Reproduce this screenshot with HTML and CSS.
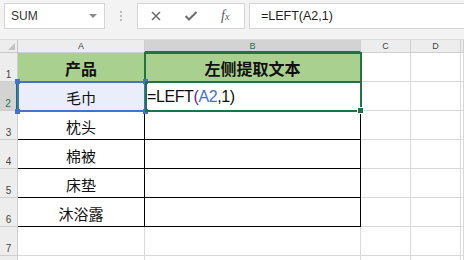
FILE: index.html
```html
<!DOCTYPE html>
<html lang="zh-CN">
<head>
    <meta charset="UTF-8">
    <title>LEFT 函数</title>
    <link rel="stylesheet" href="styles.css">
</head>
<body>
    <div class="toolbar">
        <div class="namebox">
            <span>SUM</span>
            <span class="arrow"></span>
        </div>
        <div class="sep"><span></span><span></span><span></span></div>
        <div class="fxbox">
            <svg class="icon" width="12" height="12" viewBox="0 0 12 12">
                <path d="M2 2 L10 10 M10 2 L2 10" stroke="#6d6d6d" stroke-width="1.6" fill="none"/>
            </svg>
            <svg class="icon" width="14" height="12" viewBox="0 0 14 12">
                <path d="M1.5 6 L5 9.5 L12.5 2" stroke="#6d6d6d" stroke-width="2" fill="none"/>
            </svg>
            <span class="fx">f<small>x</small></span>
        </div>
        <div class="formula">=LEFT(A2,1)</div>
    </div>

    <div class="sheet">
        <!-- column headers -->
        <div class="c corner"><span class="tri"></span></div>
        <div class="c ch">A</div>
        <div class="c ch active">B</div>
        <div class="c ch">C</div>
        <div class="c ch">D</div>
        <div class="c ch"></div>

        <!-- row 1 -->
        <div class="c rh">1</div>
        <div class="c t head">产品</div>
        <div class="c t head">左侧提取文本</div>
        <div class="c"></div><div class="c"></div><div class="c"></div>

        <!-- row 2 -->
        <div class="c rh active">2</div>
        <div class="c t ref">毛巾</div>
        <div class="c t edit">=LEFT<span class="paren">(</span><span class="blue">A2</span>,1)</div>
        <div class="c"></div><div class="c"></div><div class="c"></div>

        <div class="c rh">3</div>
        <div class="c t">枕头</div>
        <div class="c t"></div>
        <div class="c"></div><div class="c"></div><div class="c"></div>

        <div class="c rh">4</div>
        <div class="c t">棉被</div>
        <div class="c t"></div>
        <div class="c"></div><div class="c"></div><div class="c"></div>

        <div class="c rh">5</div>
        <div class="c t">床垫</div>
        <div class="c t"></div>
        <div class="c"></div><div class="c"></div><div class="c"></div>

        <div class="c rh">6</div>
        <div class="c t">沐浴露</div>
        <div class="c t"></div>
        <div class="c"></div><div class="c"></div><div class="c"></div>

        <div class="c rh">7</div>
        <div class="c"></div><div class="c"></div>
        <div class="c"></div><div class="c"></div><div class="c"></div>

        <div class="c rh"></div>
        <div class="c"></div><div class="c"></div>
        <div class="c"></div><div class="c"></div><div class="c"></div>

        <!-- selection boxes over the grid -->
        <div class="sel-b1"></div>
        <div class="sel-ref">
            <span class="h tl"></span><span class="h tr"></span>
            <span class="h bl"></span><span class="h br"></span>
        </div>
        <div class="sel-active"><span class="fill"></span></div>
    </div>
</body>
</html>
```

FILE: styles.css
```css
* {
    box-sizing: border-box;
}

body {
    margin: 0;
    background: #fff;
    font-family: "Liberation Sans", "Noto Sans CJK SC", sans-serif;
    overflow: hidden;
}

.toolbar {
    height: 40px;
    background: #f3f3f3;
    display: flex;
    align-items: flex-start;
    padding: 3px 0 0 4px;
    border-bottom: 1px solid #dcdcdc;
}

.namebox {
    width: 101px;
    height: 26px;
    background: #fff;
    border: 1px solid #d6d6d6;
    display: flex;
    align-items: center;
    justify-content: space-between;
    padding: 0 7px 0 6px;
    font-size: 12px;
    color: #333;
}

.arrow {
    width: 0;
    height: 0;
    border-left: 4px solid transparent;
    border-right: 4px solid transparent;
    border-top: 4px solid #8a8a8a;
}

.sep {
    width: 32px;
    height: 26px;
    display: flex;
    flex-direction: column;
    align-items: center;
    justify-content: center;
    gap: 2px;
}

.sep span {
    width: 2px;
    height: 2px;
    background: #bcbcbc;
}

.fxbox {
    width: 108px;
    height: 26px;
    background: #fff;
    border: 1px solid #d6d6d6;
    display: flex;
    align-items: center;
    padding-left: 12px;
    gap: 22px;
}

.fx {
    font-family: "Liberation Serif", serif;
    font-style: italic;
    font-size: 14px;
    color: #5a5a5a;
    margin-left: 1px;
}

.fx small {
    font-size: 10px;
}

.formula {
    flex: 1;
    height: 26px;
    margin-left: 4px;
    background: #fff;
    border: 1px solid #d6d6d6;
    border-right: none;
    padding-left: 11px;
    font-size: 12.5px;
    line-height: 24px;
    color: #222;
}

.sheet {
    position: relative;
    display: grid;
    grid-template-columns: 18px 127px 216px 50px 50px 1fr;
    grid-template-rows: 13px repeat(7, 29px) 7px;
}

.c {
    border-right: 1px solid #d9d9d9;
    border-bottom: 1px solid #d9d9d9;
}

.corner {
    background: #ededed;
    border-color: #c8c8c8;
    position: relative;
}

.tri {
    position: absolute;
    right: 2px;
    bottom: 2px;
    width: 0;
    height: 0;
    border-left: 7px solid transparent;
    border-bottom: 7px solid #c2c2c2;
}

.ch {
    background: #ededed;
    border-color: #cfcfcf;
    font-size: 9px;
    color: #444;
    text-align: center;
    line-height: 13px;
}

.ch.active {
    background: #d3d3d3;
    color: #217346;
    border-bottom: 2px solid #217346;
}

.rh {
    background: #ededed;
    border-color: #cfcfcf;
    font-size: 10px;
    color: #444;
    text-align: center;
    display: flex;
    align-items: flex-end;
    justify-content: center;
    padding-bottom: 1px;
}

.rh.active {
    background: #d3d3d3;
    color: #217346;
    border-right: 2px solid #217346;
}

.t {
    border-color: #000;
    display: flex;
    align-items: center;
    justify-content: center;
    font-size: 15px;
    color: #111;
    padding-top: 2px;
}

.head {
    background: #a9d08e;
    font-weight: bold;
    font-size: 16px;
}

.ref {
    background: #e9eefa;
}

.edit {
    justify-content: flex-start;
    padding-left: 2px;
    font-size: 16px;
    letter-spacing: -0.4px;
}

.paren {
    color: #5b2d80;
}

.blue {
    color: #4472c4;
}

.sel-b1 {
    position: absolute;
    left: 144px;
    top: 12px;
    width: 218px;
    height: 31px;
    border: 2px solid #217346;
}

.sel-ref {
    position: absolute;
    left: 17px;
    top: 41px;
    width: 129px;
    height: 31px;
    border: 2px solid #4472c4;
}

.h {
    position: absolute;
    width: 5px;
    height: 5px;
    background: #4472c4;
}

.tl { left: -4px; top: -4px; }
.tr { right: -4px; top: -4px; }
.bl { left: -4px; bottom: -4px; }
.br { right: -4px; bottom: -4px; }

.sel-active {
    position: absolute;
    left: 145px;
    top: 41px;
    width: 217px;
    height: 31px;
    border: 2px solid #217346;
}

.fill {
    position: absolute;
    right: -4px;
    bottom: -4px;
    width: 5px;
    height: 5px;
    background: #217346;
    border: 1px solid #fff;
    box-sizing: content-box;
}
```
